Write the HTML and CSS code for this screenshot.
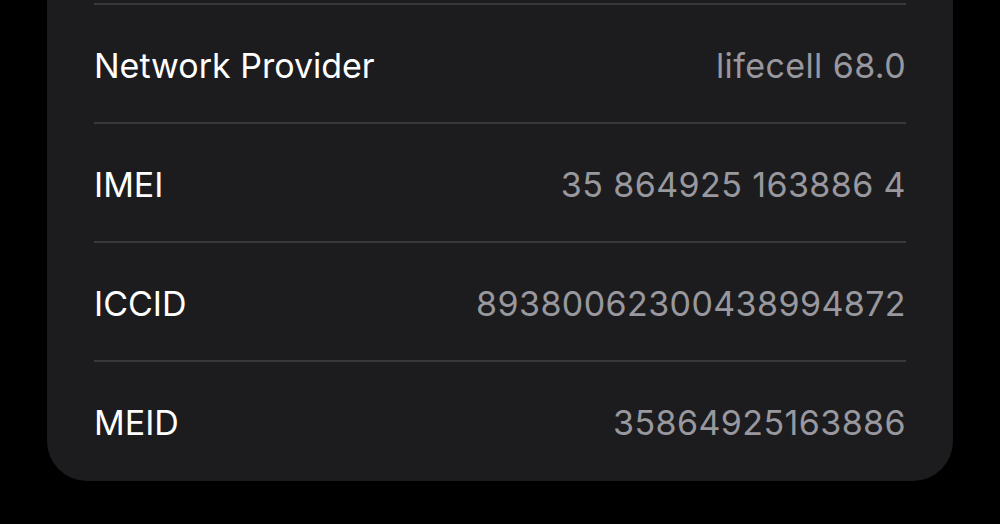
FILE: index.html
```html
<!DOCTYPE html>
<html lang="en">
<head>
    <meta charset="UTF-8">
    <meta name="viewport" content="width=device-width, initial-scale=1.0">
    <title>About</title>
    <link rel="stylesheet" href="styles.css">
</head>
<body>
    <div class="card">
        <div class="row">
            <span class="label">Network Provider</span>
            <span class="value">lifecell 68.0</span>
        </div>
        <div class="row">
            <span class="label">IMEI</span>
            <span class="value">35 864925 163886 4</span>
        </div>
        <div class="row">
            <span class="label">ICCID</span>
            <span class="value">89380062300438994872</span>
        </div>
        <div class="row">
            <span class="label">MEID</span>
            <span class="value">35864925163886</span>
        </div>
    </div>
</body>
</html>
```

FILE: styles.css
```css
body {
    margin: 0;
    background-color: #000;
    font-family: Inter, "Noto Sans", sans-serif;
}
.card {
    margin: 0 47px;
    padding: 3px 47px 2px;
    background-color: #1c1c1e;
    border-radius: 0 0 40px 40px;
}
.row {
    display: flex;
    justify-content: space-between;
    align-items: center;
    box-sizing: border-box;
    height: 119px;
    padding-top: 3px;
    border-top: 2px solid #38383a;
    font-size: 34px;
}
.label {
    color: #fff;
}
.value {
    color: #98989e;
    letter-spacing: 0.4px;
}
```
